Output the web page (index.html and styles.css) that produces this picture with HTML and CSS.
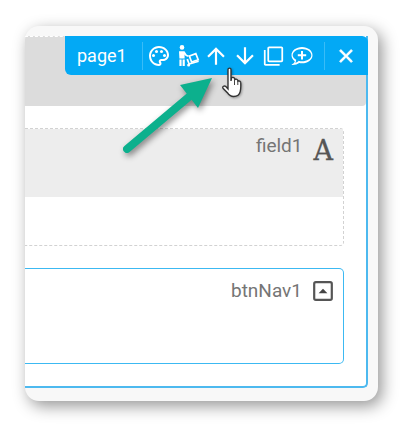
FILE: index.html
```html
<!DOCTYPE html>
<html lang="en">
<head>
    <meta charset="UTF-8">
    <title>page1</title>
    <link rel="stylesheet" href="styles.css">
</head>
<body>
<div class="stage">
    <div class="card">
        <div class="frame">
            <div class="page-band">
                <div class="page-toolbar">
                    <span class="page-name">page1</span>
                    <span class="tool-sep"></span>
                    <div class="tool-list">
                        <svg class="tool-icon" viewBox="0 0 24 24"><path d="M12 22C6.49 22 2 17.51 2 12S6.49 2 12 2s10 4.04 10 9c0 3.31-2.69 6-6 6h-1.77c-.28 0-.5.22-.5.5 0 .12.05.23.13.33.41.47.64 1.06.64 1.67 0 1.38-1.12 2.5-2.5 2.5zm0-18c-4.41 0-8 3.59-8 8s3.59 8 8 8c.28 0 .5-.22.5-.5 0-.16-.08-.28-.14-.35-.41-.46-.63-1.05-.63-1.65 0-1.38 1.12-2.5 2.5-2.5H16c2.21 0 4-1.79 4-4 0-3.86-3.59-7-8-7z"/><circle cx="6.5" cy="11.5" r="1.5"/><circle cx="9.5" cy="7.5" r="1.5"/><circle cx="14.5" cy="7.5" r="1.5"/><circle cx="17.5" cy="11.5" r="1.5"/></svg>
                        <svg class="tool-icon" viewBox="0 0 24 24"><circle cx="6" cy="3.400" r="2.300"/><path d="M3 7.200h5.500l2.300 3.600 2 .8-.6 1.500-2.600-1-1-1.500v3.800H3.400z"/><path d="M3.400 15.400h2.200V22H3.400zM6.600 15.400h2.200V22H6.600z"/><path d="M13.400 12l6.400-2.400 2.400 6.200-6.600 2.200z" fill="none" stroke="#fff" stroke-width="1.700"/><path d="M10.400 15.400l1.700-.6 1.500 4.200 8.800-2.600.5 1.600-10.200 3z"/><circle cx="12.600" cy="21" r="1.500"/></svg>
                        <svg class="tool-icon" viewBox="1 1 22 22"><path d="M4 12l1.410 1.410L11 7.830V20h2V7.830l5.580 5.590L20 12l-8-8-8 8z"/></svg>
                        <svg class="tool-icon" viewBox="1 1 22 22"><path d="M20 12l-1.410-1.410L13 16.170V4h-2v12.170l-5.580-5.590L4 12l8 8 8-8z"/></svg>
                        <svg class="tool-icon tool-copy" viewBox="0 0 24 24"><path d="M3 5H1v16c0 1.100.9 2 2 2h16v-2H3V5zm18-4H7c-1.100 0-2 .9-2 2v14c0 1.100.9 2 2 2h14c1.100 0 2-.9 2-2V3c0-1.100-.9-2-2-2zm0 16H7V3h14v14z"/></svg>
                        <svg class="tool-icon" viewBox="0 0 24 24"><path d="M12 3C6.200 3 1.500 6.600 1.500 11.200c0 2.400 1.300 4.500 3.300 6-.3 1.200-1.100 2.200-2.300 2.900L1.400 21h1.300c2.600 0 4.900-.7 6.500-2 .9.200 1.800.3 2.800.3 5.800 0 10.500-3.500 10.500-8.100S17.800 3 12 3zm0 14.300c-1 0-1.900-.1-2.800-.4l-.5-.1-.4.400c-.8.700-1.800 1.200-3 1.500.4-.7.700-1.500.8-2.300l.1-.6-.5-.4c-1.900-1.200-3-2.900-3-4.200C2.700 7.800 7 5 12 5s9.300 2.800 9.300 6.200-4.300 6.100-9.300 6.100z"/><path d="M11 7h2v3.200h3.200v2H13v3.200h-2v-3.200H7.800v-2H11z"/></svg>
                    </div>
                    <span class="tool-sep tool-sep-end"></span>
                    <svg class="tool-close" viewBox="0 0 24 24"><path d="M19 6.410L17.590 5 12 10.590 6.410 5 5 6.410 10.590 12 5 17.590 6.410 19 12 13.410 17.590 19 19 17.590 13.410 12z"/></svg>
                </div>
            </div>
            <div class="field-box">
                <div class="field-head">
                    <span class="item-name">field1</span>
                    <span class="field-type">A</span>
                </div>
            </div>
            <div class="btn-box">
                <span class="item-name">btnNav1</span>
                <svg class="btn-icon" viewBox="0 0 20 20"><rect x="2" y="2" width="16" height="16" rx="1.5"/><path d="M6 12l4-4 4 4z"/></svg>
            </div>
        </div>
    </div>
    <svg class="callout-arrow" viewBox="0 0 408 425"><path class="arrow-line" d="M127 149L190 96"/><path class="arrow-head" d="M212 78L180 85L198 108z"/></svg>
    <svg class="hand-cursor" viewBox="0 0 24 34"><path d="M6 2.500c0-1.800 3-1.800 3 0v11.500l.6-3.400c1.800-.6 3 0 3 1.200l.2.700c1.500-.7 2.800-.2 3 1l.2.700c1.300-.5 2.500 0 2.600 1.200.4 3.300.2 6.500-.4 9.300-.6 2.800-2.700 4.800-6.500 4.800-3.200 0-4.900-1.300-6.300-3.800L1 21.200c-.9-1.500 1.300-3.200 2.800-1.600L6 22z"/><path class="hand-line" d="M12.500 12v6M15.800 13v5M18.600 14.500v4"/></svg>
</div>
</body>
</html>
```
FILE: styles.css
```css
* {
    box-sizing: border-box;
}
html, body {
    margin: 0;
    background: #fff;
}
.stage {
    position: relative;
    width: 408px;
    height: 425px;
    padding: 26px 30px 24px 25px;
    font-family: Roboto, "Liberation Sans", sans-serif;
}
.card {
    height: 375px;
    padding: 10px 10px 0 0;
    background: #f8f8f8;
    border-radius: 14px;
    box-shadow: 4px 5px 16px rgba(0, 0, 0, .42);
    overflow: hidden;
}
.frame {
    height: 352px;
    padding-right: 22px;
    background: #fff;
    border-right: 2px solid #4db9ef;
    border-bottom: 2px solid #4db9ef;
    border-bottom-right-radius: 5px;
}
.page-band {
    display: flex;
    justify-content: flex-end;
    height: 70px;
    margin: 0 -22px 22px 0;
    background: #dcdcdc;
    border-top: 1px dashed #fff;
    border-bottom-right-radius: 4px;
}
.page-toolbar {
    display: flex;
    align-items: center;
    width: 303px;
    height: 39px;
    margin: -1px -2px 0 0;
    padding-left: 12px;
    color: #fff;
    background: #03a9f5;
    border-radius: 0 6px 0 6px;
}
.page-name {
    width: 65px;
    font-size: 18px;
}
.tool-sep {
    width: 1px;
    height: 28px;
    background: #39bcf7;
}
.tool-list {
    display: flex;
    gap: 4.5px;
    margin-left: 4px;
}
.tool-icon {
    width: 24px;
    height: 24px;
    fill: #fff;
}
.tool-copy {
    width: 21px;
    margin: 0 1.5px;
}
.tool-sep-end {
    margin-left: 10px;
}
.tool-close {
    width: 22px;
    height: 22px;
    margin-left: 10px;
    fill: #fff;
    stroke: #fff;
    stroke-width: 1;
}
.field-box {
    height: 118px;
    border: 1px dashed #d2d2d2;
    border-left: 0;
    border-radius: 0 4px 4px 0;
}
.field-head {
    display: flex;
    justify-content: flex-end;
    align-items: flex-start;
    height: 68px;
    padding: 6px 10px 0 0;
    background: #ededed;
}
.item-name {
    font-size: 19px;
    line-height: 22px;
    color: #757575;
}
.field-type {
    margin-left: 11px;
    font-family: "DejaVu Serif", serif;
    font-size: 27px;
    line-height: 32px;
    color: #555;
    -webkit-text-stroke: .3px #555;
}
.btn-box {
    display: flex;
    justify-content: flex-end;
    align-items: flex-start;
    height: 96px;
    margin-top: 22px;
    padding: 11px 9px 0 0;
    border: 1px solid #3cb9f2;
    border-left: 0;
    border-radius: 0 5px 5px 0;
}
.btn-icon {
    width: 22px;
    height: 22px;
    margin-left: 10px;
}
.btn-icon rect {
    fill: none;
    stroke: #555;
    stroke-width: 2;
}
.btn-icon path {
    fill: #444;
}
.callout-arrow {
    position: absolute;
    left: 0;
    top: 0;
    width: 408px;
    height: 425px;
    filter: drop-shadow(2px 3px 3px rgba(0, 0, 0, .45));
}
.arrow-line {
    fill: none;
    stroke: #0cb08d;
    stroke-width: 8;
    stroke-linecap: round;
}
.arrow-head {
    fill: #0cb08d;
}
.hand-cursor {
    position: absolute;
    left: 222px;
    top: 67px;
    width: 24px;
    height: 34px;
    filter: drop-shadow(1px 1px 1px rgba(0, 0, 0, .3));
}
.hand-cursor path {
    fill: #fff;
    stroke: #333;
    stroke-width: 1.4;
}
.hand-cursor .hand-line {
    fill: none;
    stroke: #444;
    stroke-width: 1;
}
```
